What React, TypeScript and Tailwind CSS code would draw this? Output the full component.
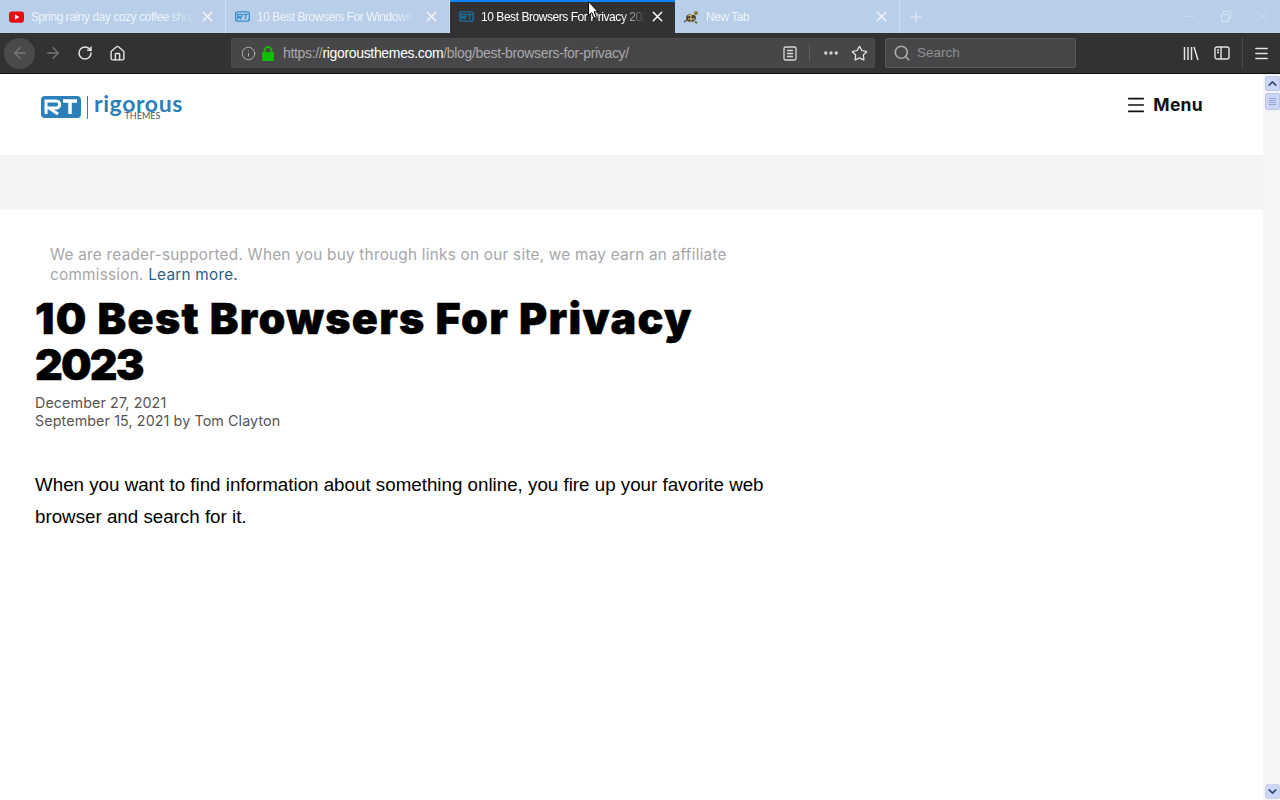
import React from 'react';
import { ArrowLeft, ArrowRight, ChevronDown, ChevronUp, Ellipsis, Home, Info, Menu, Minus, Plus, RotateCw, Search, Star, X } from 'lucide-react';

const RtIcon = ({ color = '#3b8fc9' }: { color?: string }) => (
  <svg width="15" height="11" viewBox="0 0 42 30">
    <rect x="2" y="2" width="38" height="26" rx="6" fill="none" stroke={color} strokeWidth="4" />
    <path d="M8 23V9h9c4 0 4 7 0 7h-6l7 7M23 9h13M29.500 9v14" fill="none" stroke={color} strokeWidth="4" />
  </svg>
);

const YoutubeIcon = () => (
  <svg width="16" height="12" viewBox="0 0 16 12" className="ml-[1px]">
    <rect width="16" height="12" rx="3" fill="#e60f12" />
    <path d="M6.300 3.200 11 6l-4.700 2.800z" fill="#fff" />
  </svg>
);

const TurtleIcon = () => (
  <svg width="16" height="14" viewBox="0 0 16 14">
    <ellipse cx="8" cy="8" rx="5" ry="4" fill="#4b4326" />
    <path d="M5 6l6-2M5 9l7 0M8 4v8" stroke="#d8c98c" strokeWidth="1" />
    <circle cx="13" cy="3" r="2" fill="#8b7a3c" />
    <path d="M1 12l3-2M12 12l2 1" stroke="#5a4f2a" strokeWidth="1.500" />
  </svg>
);

const LockIcon = () => (
  <svg width="14" height="15" viewBox="0 0 14 15" className="ml-[5px] shrink-0">
    <rect x="1" y="6" width="12" height="9" rx="1" fill="#12bc00" />
    <path d="M3.500 6.500V4.500a3.500 3.500 0 0 1 7 0v2" fill="none" stroke="#12bc00" strokeWidth="1.800" />
  </svg>
);

type TabProps = { icon: React.ReactNode; title: string; active?: boolean; width: string };

// one browser tab, the title fades out under the close button
const Tab = ({ icon, title, active, width }: TabProps) => (
  <div className={`relative flex h-full items-center pl-[8px] pr-[9px] ${width} ${active ? 'bg-[#323234]' : 'border-r border-[#cfdff1]'}`}>
    {active && <div className="absolute inset-x-0 top-0 h-[2px] bg-[#0a84ff]" />}
    <span className="flex w-[16px] shrink-0 justify-center">{icon}</span>
    <span
      className={`ml-[7px] min-w-0 flex-1 overflow-hidden whitespace-nowrap font-['Liberation_Sans',sans-serif] text-[12px] tracking-[-0.45px] [mask-image:linear-gradient(to_right,black_85%,transparent)] ${active ? 'text-white' : 'text-[#eef4fb]'}`}
    >
      {title}
    </span>
    <X size={17} strokeWidth={2} className={`ml-[4px] shrink-0 ${active ? 'text-white' : 'text-[#f2f6fc]'}`} />
  </div>
);

const ToolIcon = ({ children, className }: { children: React.ReactNode; className?: string }) => (
  <span className={`flex shrink-0 items-center justify-center ${className ?? ''}`}>{children}</span>
);

const TabBar = () => (
  <div className="flex h-[33px] bg-[#b9cfe9]">
    <Tab width="w-[226px]" icon={<YoutubeIcon />} title="Spring rainy day cozy coffee shop" />
    <Tab width="w-[224px]" icon={<RtIcon />} title="10 Best Browsers For Windows 10" />
    <Tab width="w-[225px]" active icon={<RtIcon color="#1f6f9f" />} title="10 Best Browsers For Privacy 2023" />
    <Tab width="w-[225px]" icon={<TurtleIcon />} title="New Tab" />
    <div className="ml-[7px] flex items-center">
      <Plus size={18} strokeWidth={1.500} className="text-[#e4edf8]" />
    </div>
    <div className="ml-auto flex items-center gap-[22px] pr-[9px] text-[#d3e1f2]">
      <Minus size={15} strokeWidth={1} />
      <svg width="13" height="13" viewBox="0 0 13 13" fill="none" stroke="currentColor">
        <path d="M2.500 4.500h7v7h-7zM4.500 4V1.500h7v7H10" />
      </svg>
      <X size={17} strokeWidth={1} />
    </div>
  </div>
);

const NavBar = () => (
  <div className="flex h-[41px] items-center border-b border-[#0c0c0d] bg-[#323234] font-['Liberation_Sans',sans-serif]">
    <div className="ml-[4px] flex h-[31px] w-[31px] items-center justify-center rounded-full bg-[#4a4a4c]">
      <ArrowLeft size={18} strokeWidth={1.750} className="text-[#77777a]" />
    </div>
    <ToolIcon className="ml-[9px] text-[#77777a]">
      <ArrowRight size={18} strokeWidth={1.750} />
    </ToolIcon>
    <ToolIcon className="ml-[15px] text-[#e4e4e6]">
      <RotateCw size={16} strokeWidth={2.250} />
    </ToolIcon>
    <ToolIcon className="ml-[16px] text-[#e4e4e6]">
      <Home size={17} strokeWidth={2} />
    </ToolIcon>
    <div className="ml-[105px] flex h-[30px] w-[644px] items-center rounded-[2px] border border-[#4c4c4e] bg-[#474749] pl-[9px] pr-[6px]">
      <Info size={15} strokeWidth={1.500} className="text-[#b5b5b7]" />
      <LockIcon />
      <span className="ml-[8px] flex-1 whitespace-nowrap text-[14px] tracking-[-0.33px] text-[#a9a9ab]">
        https://<span className="text-white">rigorousthemes.com</span>/blog/best-browsers-for-privacy/
      </span>
      <svg width="14" height="15" viewBox="0 0 14 15" fill="none" stroke="#d7d7d9" strokeWidth="1.300">
        <rect x="1" y="1" width="12" height="13" rx="1.500" />
        <path d="M4 4.500h6M4 7.500h6M4 10.500h6" />
      </svg>
      <div className="mx-[12px] h-[18px] w-px bg-[#5c5c5e]" />
      <Ellipsis size={18} strokeWidth={2.500} className="text-[#d7d7d9]" />
      <Star size={17} strokeWidth={1.750} className="ml-[11px] text-[#e4e4e6]" />
    </div>
    <div className="ml-[10px] flex h-[30px] w-[191px] items-center rounded-[2px] border border-[#59595b] bg-[#474749] pl-[7px]">
      <Search size={18} strokeWidth={2.250} className="text-[#a9a9ab]" />
      <span className="ml-[6px] text-[13.500px] text-[#8f8f91]">Search</span>
    </div>
    <ToolIcon className="ml-[107px] text-[#e4e4e6]">
      <svg width="16" height="15" viewBox="0 0 16 15" fill="none" stroke="currentColor" strokeWidth="1.500">
        <path d="M1.500 1v13M5 1v13M8.500 1v13M11 1l4 13" />
      </svg>
    </ToolIcon>
    <ToolIcon className="ml-[15px] text-[#e4e4e6]">
      <svg width="16" height="14" viewBox="0 0 16 14" fill="none" stroke="currentColor" strokeWidth="1.400">
        <rect x="1" y="1" width="14" height="12" rx="2" />
        <path d="M7 1v12M3 4h2M3 6.500h2" />
      </svg>
    </ToolIcon>
    <div className="ml-[12px] h-[30px] w-px bg-[#4c4c4e]" />
    <ToolIcon className="ml-[10px] text-[#e4e4e6]">
      <Menu size={17} strokeWidth={2} />
    </ToolIcon>
  </div>
);

const Logo = () => (
  <div className="flex items-center">
    <svg width="42" height="24" viewBox="0 0 42 24">
      <rect x="1" y="1" width="40" height="22" rx="4" fill="#2c80b9" />
      <path d="M6 19V6h10c5 0 5 7 0 7H9l9 6" fill="none" stroke="#fff" strokeWidth="3" />
      <path d="M23 6h14M30 6v13" fill="none" stroke="#fff" strokeWidth="3.500" />
    </svg>
    <div className="ml-[5px] h-[23px] w-px bg-[#2c80b9]" />
    <div className="ml-[6px] flex flex-col items-center font-['Lato',sans-serif] leading-none">
      <span className="text-[23px] font-bold leading-[18px] tracking-[0.600px] text-[#2c80b9]">rigorous</span>
      <span className="ml-[8px] text-[9px] leading-[8px] text-[#4a5560]">THEMES</span>
    </div>
  </div>
);

const Page = () => (
  <div className="min-w-0 flex-1 bg-white">
    <header className="flex h-[81px] items-start justify-between pl-[40px] pr-[60px] pt-[20px]">
      <Logo />
      <div className="flex items-center">
        <Menu size={22} strokeWidth={1.750} className="text-[#111]" />
        <span className="ml-[6px] font-['Inter',sans-serif] text-[17.500px] font-bold leading-[22px] tracking-[0.300px] text-[#111]">Menu</span>
      </div>
    </header>
    <div className="h-[55px] bg-[#f3f4f6]" />
    <main className="pl-[35px]">
      <p className="ml-[15px] mt-[35px] w-[700px] font-['Inter',sans-serif] text-[15.300px] leading-[20px] tracking-[0.250px] text-[#a6a6a8]">
        We are reader-supported. When you buy through links on our site, we may earn an affiliate commission.{' '}
        <span className="text-[#2a5d8c]">Learn more.</span>
      </p>
      <h1 className="mt-[10px] w-[720px] font-['Inter',sans-serif] text-[43px] font-black leading-[46px] tracking-[1.300px] text-black [-webkit-text-stroke:0.5px_black]">
        10 Best Browsers For Privacy <span className="tracking-[-1.800px]">2023</span>
      </h1>
      <div className="mt-[7px] font-['Inter',sans-serif] text-[14.300px] leading-[18px] tracking-[0.100px] text-[#555]">
        <div>December 27, 2021</div>
        <div>September 15, 2021 by Tom Clayton</div>
      </div>
      <p className="mt-[39px] w-[740px] font-['Liberation_Sans',sans-serif] text-[18.750px] leading-[32px] text-black">
        When you want to find information about something online, you fire up your favorite web browser and search for it.
      </p>
    </main>
  </div>
);

const Scrollbar = () => (
  <div className="flex w-[17px] flex-col items-center bg-[#f6f6f8]">
    <div className="ml-[1px] mt-[2px] flex h-[15px] w-[15px] items-center justify-center rounded-[2px] border border-[#b9c6e8] bg-[#cdd7f3]">
      <ChevronUp size={13} strokeWidth={3} className="text-[#2f4a78]" />
    </div>
    <div className="ml-[1px] mt-[2px] flex h-[17px] w-[15px] flex-col items-center justify-center gap-[1px] rounded-[2px] border border-[#b9c6e8] bg-[#cdd7f3]">
      <div className="h-px w-[7px] bg-[#8fa3d4]" />
      <div className="h-px w-[7px] bg-[#8fa3d4]" />
      <div className="h-px w-[7px] bg-[#8fa3d4]" />
      <div className="h-px w-[7px] bg-[#8fa3d4]" />
    </div>
    <div className="ml-[1px] mb-[1px] mt-auto flex h-[15px] w-[15px] items-center justify-center rounded-[2px] border border-[#c9d3ee] bg-[#cdd7f3]">
      <ChevronDown size={13} strokeWidth={3} className="text-[#2f4a78]" />
    </div>
  </div>
);

const App: React.FC = () => {
  return (
    <div className="relative flex h-[800px] w-[1280px] flex-col overflow-hidden bg-white">
      <TabBar />
      <NavBar />
      <div className="flex min-h-0 flex-1">
        <Page />
        <Scrollbar />
      </div>
      {/* mouse pointer caught in the screenshot */}
      <svg className="absolute left-[588px] top-[1px]" width="11" height="18" viewBox="0 0 11 18">
        <path d="M.5.5v14l3.300-3 2.200 5.500 2.300-1-2.200-5.200H10z" fill="#fff" stroke="#000" strokeWidth="1" />
      </svg>
    </div>
  );
};

export default App;
